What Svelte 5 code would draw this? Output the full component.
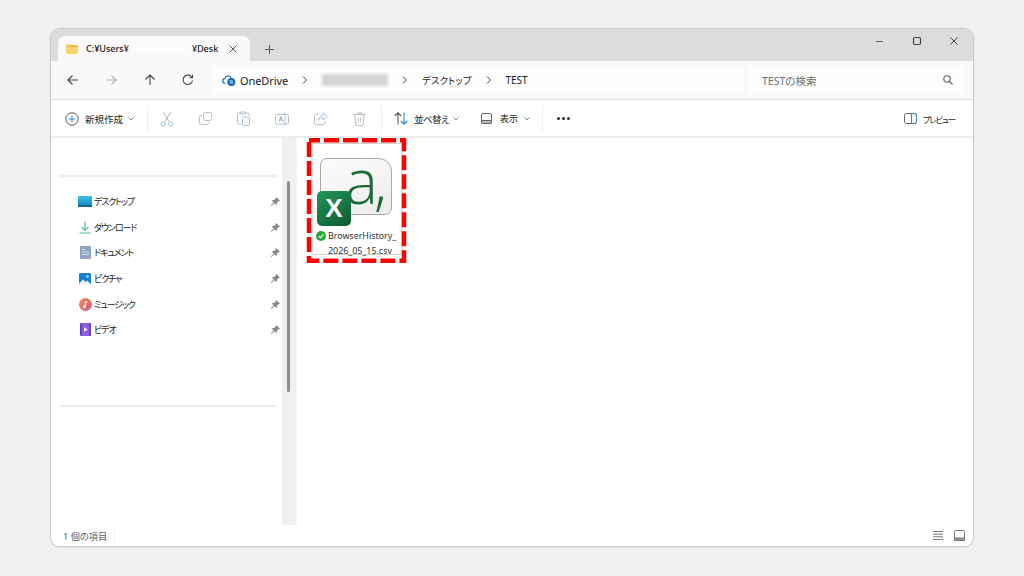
<script lang="ts">
	// Quick access rows in the sidebar
	const quickAccess = [
		{ name: 'デスクトップ', icon: 'desktop' },
		{ name: 'ダウンロード', icon: 'download' },
		{ name: 'ドキュメント', icon: 'document' },
		{ name: 'ピクチャ', icon: 'picture' },
		{ name: 'ミュージック', icon: 'music' },
		{ name: 'ビデオ', icon: 'video' }
	];
</script>

<div class="page">
	<div class="window">
		<!-- Tab strip -->
		<div class="tabbar">
			<div class="tab">
				<svg class="folder" width="12" height="10" viewBox="0 0 12 10">
					<path d="M0 1.200C0 .5.5 0 1.200 0h2.600l1.400 1.200h5.600c.7 0 1.200.5 1.200 1.200v6.400c0 .7-.5 1.200-1.200 1.200H1.200C.5 10 0 9.500 0 8.800z" fill="#f8d26a"></path>
					<path d="M0 3h12V2.400c0-.7-.5-1.200-1.200-1.200H5.200L3.800 2.400H0z" fill="#eab83f"></path>
				</svg>
				<span class="tab-title">C:¥Users¥<span class="tab-blur"></span>¥Desk</span>
				<svg class="tab-close" width="8" height="8" viewBox="0 0 8 8" fill="none" stroke="#555" stroke-width="1">
					<path d="M.5.5l7 7M7.500.5l-7 7"></path>
				</svg>
			</div>
			<svg class="tab-add" width="9" height="9" viewBox="0 0 9 9" stroke="#555" stroke-width="1">
				<path d="M4.500 0v9M0 4.500h9"></path>
			</svg>
			<div class="caption">
				<svg width="10" height="10" viewBox="0 0 10 10" stroke="#666" stroke-width="1"><path d="M1 5.500h7"></path></svg>
				<svg width="10" height="10" viewBox="0 0 10 10" fill="none" stroke="#444" stroke-width="1.200"><rect x="1.500" y="1.500" width="7" height="7" rx="1.200"></rect></svg>
				<svg width="10" height="10" viewBox="0 0 10 10" stroke="#444" stroke-width="1"><path d="M1.500 1.500l7 7M8.500 1.500l-7 7"></path></svg>
			</div>
		</div>

		<!-- Navigation and address -->
		<div class="navbar">
			<div class="nav-buttons">
				<svg width="12" height="12" viewBox="0 0 12 12" fill="none" stroke="#444" stroke-width="1.100"><path d="M11 6H1M5.500 1.500L1 6l4.500 4.500"></path></svg>
				<svg width="12" height="12" viewBox="0 0 12 12" fill="none" stroke="#b4b4b4" stroke-width="1.100"><path d="M1 6h10M6.500 1.500L11 6l-4.500 4.500"></path></svg>
				<svg width="12" height="12" viewBox="0 0 12 12" fill="none" stroke="#444" stroke-width="1.100"><path d="M6 11V1M1.500 5.500L6 1l4.500 4.500"></path></svg>
				<svg width="12" height="12" viewBox="0 0 12 12" fill="none" stroke="#444" stroke-width="1.100"><path d="M10.500 6.500A4.700 4.700 0 1 1 9 2.300L10.500 3.800M10.500 .8v3H7.500"></path></svg>
			</div>
			<div class="address">
				<svg class="cloud" width="14" height="13" viewBox="0 0 15 13">
					<path d="M3.500 9.500a2.500 2.500 0 0 1-.3-5A3.500 3.500 0 0 1 9.800 3.500" fill="none" stroke="#1f72c8" stroke-width="1.300"></path>
					<circle cx="10" cy="8" r="4.300" fill="#1668bb"></circle>
					<path d="M8 7h3.500M12 9H8.500" stroke="#fff" stroke-width=".9"></path>
				</svg>
				<span class="crumb first">OneDrive</span>
				<svg class="chev" width="6" height="8" viewBox="0 0 6 8" fill="none" stroke="#444" stroke-width="1"><path d="M1 .5L4.500 4 1 7.500"></path></svg>
				<span class="addr-blur"></span>
				<svg class="chev" width="6" height="8" viewBox="0 0 6 8" fill="none" stroke="#444" stroke-width="1"><path d="M1 .5L4.500 4 1 7.500"></path></svg>
				<span class="crumb">デスクトップ</span>
				<svg class="chev" width="6" height="8" viewBox="0 0 6 8" fill="none" stroke="#444" stroke-width="1"><path d="M1 .5L4.500 4 1 7.500"></path></svg>
				<span class="crumb">TEST</span>
			</div>
			<div class="search">
				<span>TESTの検索</span>
				<svg width="10" height="10" viewBox="0 0 10 10" fill="none" stroke="#555" stroke-width="1.100"><circle cx="4" cy="4" r="3.200"></circle><path d="M6.400 6.400L9.500 9.500"></path></svg>
			</div>
		</div>

		<!-- Command bar -->
		<div class="toolbar">
			<div class="tool new">
				<svg width="14" height="14" viewBox="0 0 14 14" fill="none"><circle cx="7" cy="7" r="6.200" stroke="#555" stroke-width="1"></circle><path d="M7 3.800v6.400M3.800 7h6.400" stroke="#2b88d8" stroke-width="1.100"></path></svg>
				<span>新規作成</span>
				<svg class="caret" width="6" height="4" viewBox="0 0 6 4" fill="none" stroke="#777" stroke-width=".9"><path d="M.5.5L3 3 5.500.5"></path></svg>
			</div>
			<i class="sep first-sep"></i>
			<div class="edit-icons">
				<svg width="14" height="16" viewBox="0 0 14 16" fill="none" stroke-width="1"><path d="M3 1l6 9.500M11 1L5 10.500" stroke="#b0b6bc"></path><circle cx="3.300" cy="13" r="2.300" stroke="#9cc8ee"></circle><circle cx="10.700" cy="13" r="2.300" stroke="#9cc8ee"></circle></svg>
				<svg width="13" height="13" viewBox="0 0 13 13" fill="none" stroke-width="1"><rect x="4.500" y=".5" width="8" height="8" rx="1.800" stroke="#9cc8ee"></rect><path d="M3 3.500H2.500a2 2 0 0 0-2 2v5a2 2 0 0 0 2 2h5a2 2 0 0 0 2-2V10" stroke="#b8bdc2"></path></svg>
				<svg width="13" height="15" viewBox="0 0 13 15" fill="none" stroke-width="1"><path d="M3.500 2H2a1.500 1.500 0 0 0-1.500 1.500v8A1.500 1.500 0 0 0 2 13h2M9 2h1.500A1.500 1.500 0 0 1 12 3.500V5M3.500 1h5v2h-5z" stroke="#b8bdc2"></path><rect x="5.500" y="6" width="7" height="8.500" rx="1.500" stroke="#9cc8ee"></rect></svg>
				<svg width="14" height="14" viewBox="0 0 14 14" fill="none" stroke-width="1"><rect x=".5" y="2.500" width="13" height="9.500" rx="1.800" stroke="#b8bdc2"></rect><path d="M4 9.500l2-5 2 5M4.700 8h2.600" stroke="#9ea4aa"></path><path d="M10 .5v13" stroke="#9cc8ee"></path></svg>
				<svg width="14" height="13" viewBox="0 0 14 13" fill="none" stroke-width="1"><path d="M5 2H2.500a2 2 0 0 0-2 2v6.500a2 2 0 0 0 2 2H9a2 2 0 0 0 2-2V9" stroke="#b8bdc2"></path><path d="M9 .8l4.300 3.700L9 8.200V6C7 6 5.500 6.500 4.500 8.500 4.800 5.500 6.500 3.300 9 3z" stroke="#9cc8ee"></path></svg>
				<svg width="13" height="14" viewBox="0 0 13 14" fill="none" stroke="#b8bdc2" stroke-width="1"><path d="M.5 2.500h12M4.500 2.500V1h4v1.500M2 2.500l.7 9.500a1.500 1.500 0 0 0 1.500 1.500h4.600A1.500 1.500 0 0 0 10.300 12l.7-9.500M5.300 5.500v5M7.700 5.500v5"></path></svg>
			</div>
			<i class="sep second-sep"></i>
			<div class="tool sort">
				<svg width="14" height="13" viewBox="0 0 14 13" fill="none" stroke-width="1.100"><path d="M4 12.500V1M.8 4L4 .8 7.200 4" stroke="#555"></path><path d="M10 .5V12M6.800 9l3.200 3.200L13.200 9" stroke="#2b88d8"></path></svg>
				<span>並べ替え</span>
				<svg class="caret" width="6" height="4" viewBox="0 0 6 4" fill="none" stroke="#777" stroke-width=".9"><path d="M.5.5L3 3 5.500.5"></path></svg>
			</div>
			<div class="tool view">
				<svg width="11" height="11" viewBox="0 0 11 11" fill="none" stroke="#666" stroke-width="1"><rect x=".5" y=".5" width="10" height="10" rx="1.500"></rect><path d="M.5 7.500h10v1.500a1.500 1.500 0 0 1-1.500 1.500H2A1.500 1.500 0 0 1 .5 9z" fill="#bbb"></path></svg>
				<span>表示</span>
				<svg class="caret" width="6" height="4" viewBox="0 0 6 4" fill="none" stroke="#777" stroke-width=".9"><path d="M.5.5L3 3 5.500.5"></path></svg>
			</div>
			<i class="sep third-sep"></i>
			<div class="dots"><i></i><i></i><i></i></div>
			<div class="tool preview">
				<svg width="13" height="11" viewBox="0 0 13 11" fill="none" stroke-width="1"><rect x=".5" y=".5" width="12" height="10" rx="2" stroke="#666"></rect><path d="M7.500.5h3a2 2 0 0 1 2 2v6a2 2 0 0 1-2 2h-3z" stroke="#2b88d8"></path></svg>
				<span>プレビュー</span>
			</div>
		</div>

		<!-- Sidebar and file pane -->
		<div class="body">
			<aside class="sidebar">
				<div class="side-list">
					<hr />
					<ul>
						{#each quickAccess as item}
							<li>
								<span class="side-icon">
									{#if item.icon === 'desktop'}
										<svg width="14" height="11" viewBox="0 0 14 11"><defs><linearGradient id="dk" x1="0" y1="0" x2="0" y2="1"><stop offset="0" stop-color="#3cc3e6"></stop><stop offset="1" stop-color="#0e7fb8"></stop></linearGradient></defs><rect width="14" height="11" rx="1" fill="url(#dk)"></rect><rect x="0" y="9.300" width="14" height="1.700" fill="#0b5f92"></rect></svg>
									{:else if item.icon === 'download'}
										<svg width="12" height="13" viewBox="0 0 12 13" fill="none" stroke-width="1.100"><path d="M6 .5v8.500M2.500 5.800L6 9.300l3.500-3.500" stroke="#46b28c"></path><path d="M.5 12h11" stroke="#7fd6bc" stroke-width="1.400"></path></svg>
									{:else if item.icon === 'document'}
										<svg width="11" height="13" viewBox="0 0 11 13"><rect width="11" height="13" rx="1" fill="#8ea5c0"></rect><path d="M2 3.500h3M2 6h7M2 8.500h7" stroke="#d6e0ea" stroke-width="1"></path></svg>
									{:else if item.icon === 'picture'}
										<svg width="12" height="12" viewBox="0 0 12 12"><rect width="12" height="12" rx="1" fill="#1580d8"></rect><path d="M0 10.500l4-4 2.500 2.500 1.500-1.500 4 3.500V11a1 1 0 0 1-1 1H1a1 1 0 0 1-1-1z" fill="#e8f4fc"></path><circle cx="8.500" cy="3.500" r="1.200" fill="#bfe2fa"></circle></svg>
									{:else if item.icon === 'music'}
										<svg width="13" height="13" viewBox="0 0 13 13"><defs><linearGradient id="mu" x1="0" y1="0" x2="1" y2="1"><stop offset="0" stop-color="#ee8a4e"></stop><stop offset="1" stop-color="#d05a8a"></stop></linearGradient></defs><circle cx="6.500" cy="6.500" r="6.500" fill="url(#mu)"></circle><circle cx="5.300" cy="8.800" r="1.400" fill="#fff"></circle><path d="M6.300 8.800V3.500l2.400 1" fill="none" stroke="#fff" stroke-width="1"></path></svg>
									{:else}
										<svg width="11" height="13" viewBox="0 0 11 13"><rect width="11" height="13" rx="1" fill="#6b3ec4"></rect><rect x="2" y="0" width="7" height="13" fill="#8d5de0"></rect><path d="M4 4.300l3.500 2.200L4 8.700z" fill="#fff"></path></svg>
									{/if}
								</span>
								<span class="side-name">{item.name}</span>
								<svg class="pin" width="9" height="9" viewBox="0 0 9 9" fill="#8a8a8a"><path d="M5.300 0L9 3.700l-.8.6-.7-.2L5.800 6l.1 1.400-.7.700L3.300 6.200 .7 8.800 0 8.700l.1-.6 2.600-2.600L.9 3.700l.7-.7L3 3.100l1.900-1.700-.2-.7z"></path></svg>
							</li>
						{/each}
					</ul>
					<hr class="bottom" />
				</div>
				<div class="scrollbar"><i></i></div>
			</aside>

			<main class="files">
				<div class="file">
					<svg class="annotation" width="101" height="125" viewBox="0 0 101 125" fill="none">
						<rect x="6" y="5.500" width="90" height="111" stroke="#cfcfcf" stroke-width="1"></rect>
						<rect x="3" y="2.300" width="95" height="120.400" stroke="#ff0000" stroke-width="4.500" stroke-dasharray="15 4" stroke-dashoffset="4"></rect>
					</svg>
					<div class="thumb">
						<div class="sheet">
							<svg width="72" height="58" viewBox="0 0 72 58">
								<text x="25" y="46" font-family="Open Sans" font-weight="300" font-size="62" letter-spacing="-4" fill="#1c6b33">a,</text>
							</svg>
						</div>
						<div class="excel">X</div>
					</div>
					<div class="file-label">
						<svg class="synced" width="10" height="10" viewBox="0 0 10 10"><circle cx="5" cy="5" r="5" fill="#2aa83a"></circle><path d="M2.600 5.200l1.700 1.600 3.100-3.300" fill="none" stroke="#fff" stroke-width="1.100"></path></svg>
						<span>BrowserHistory_<br />2026_05_15.csv</span>
					</div>
				</div>
			</main>
		</div>

		<!-- Status bar -->
		<div class="statusbar">
			<span class="count">1 個の項目</span>
			<i class="status-sep"></i>
			<div class="view-switch">
				<svg width="10" height="9" viewBox="0 0 10 9" stroke="#777" stroke-width="1"><path d="M0 .5h10M0 3.200h10M0 5.800h10M0 8.500h10"></path></svg>
				<svg width="11" height="11" viewBox="0 0 11 11" fill="none" stroke="#777" stroke-width="1"><rect x=".5" y=".5" width="10" height="10" rx="1"></rect><path d="M.5 8h10v2.500H.5z" fill="#999"></path></svg>
			</div>
		</div>
	</div>
</div>

<style>
	:global(body) {
		margin: 0;
		background: #f0f0f0;
	}

	.page {
		box-sizing: border-box;
		width: 1024px;
		height: 576px;
		padding: 29px 51px 30px;
		font-family: 'Noto Sans', 'Noto Sans CJK JP', sans-serif;
		font-feature-settings: 'palt';
		color: #222;
	}

	.window {
		display: flex;
		flex-direction: column;
		height: 100%;
		background: #fff;
		border-radius: 8px;
		box-shadow: 0 0 0 1px #c9c9c9, 0 1px 2px rgba(0, 0, 0, 0.15);
		overflow: hidden;
	}

	.tabbar {
		display: flex;
		align-items: flex-end;
		flex: none;
		height: 32px;
		padding-left: 7px;
		background: #dcdcdc;
	}

	.tab {
		display: flex;
		align-items: center;
		box-sizing: border-box;
		width: 192px;
		height: 25px;
		padding: 0 13px 0 8px;
		background: #f9f9f9;
		border-radius: 7px 7px 0 0;
	}

	.tab-title {
		width: 132px;
		margin-left: 8px;
		white-space: nowrap;
		font-size: 9.200px;
		font-weight: 500;
		letter-spacing: -0.1px;
	}

	.tab-blur {
		display: inline-block;
		width: 63px;
		height: 9px;
		background: #fafafa;
		filter: blur(2px);
	}

	.tab-close {
		margin-left: auto;
	}

	.tab-add {
		align-self: center;
		margin: 8px 0 0 15px;
	}

	.caption {
		display: flex;
		align-items: center;
		gap: 27px;
		align-self: flex-start;
		height: 24px;
		margin-left: auto;
		padding-right: 14px;
	}

	.navbar {
		display: flex;
		align-items: center;
		flex: none;
		height: 39px;
		padding: 0 9px 0 16px;
		background: #f9f9f9;
		border-bottom: 1px solid #dedede;
		box-sizing: border-box;
	}

	.nav-buttons {
		display: flex;
		gap: 26.300px;
		width: 145px;
	}

	.address {
		display: flex;
		align-items: center;
		box-sizing: border-box;
		width: 531px;
		height: 26px;
		padding-left: 10px;
		background: #fdfdfd;
		border-radius: 4px;
	}

	.crumb {
		font-size: 9.500px;
		white-space: nowrap;
	}

	.crumb:last-child {
		font-size: 10px;
	}

	.crumb.first {
		margin-left: 4px;
		font-size: 11px;
		letter-spacing: -0.1px;
	}

	.chev {
		margin: 0 14px;
	}

	.addr-blur {
		width: 66px;
		height: 12px;
		background: #d4d4d4;
		filter: blur(1.500px);
	}

	.search {
		display: flex;
		align-items: center;
		justify-content: space-between;
		box-sizing: border-box;
		width: 215px;
		height: 26px;
		margin-left: 6px;
		padding: 0 11px 0 13px;
		background: #fdfdfd;
		border-radius: 4px;
		font-size: 10.500px;
		color: #6c6c6c;
	}

	.toolbar {
		display: flex;
		align-items: center;
		flex: none;
		box-sizing: border-box;
		height: 38px;
		padding: 1px 0 0 14px;
		background: #fff;
		border-bottom: 2px solid #ececec;
		font-size: 9.500px;
	}

	.tool {
		display: flex;
		align-items: center;
	}

	.tool span {
		white-space: nowrap;
	}

	.new span {
		margin: 0 5px 0 6px;
	}

	.sep {
		width: 1px;
		height: 26px;
		background: #efefef;
	}

	.first-sep {
		margin-left: 13px;
	}

	.edit-icons {
		display: flex;
		align-items: center;
		gap: 25px;
		box-sizing: border-box;
		width: 233px;
		padding-left: 12px;
	}

	.sort {
		margin-left: 12px;
	}

	.sort span {
		margin: 0 4px 0 6px;
		letter-spacing: -0.6px;
	}

	.view {
		margin-left: 22px;
	}

	.view span {
		margin: 0 6px 0 8px;
		font-size: 9px;
	}

	.third-sep {
		margin-left: 12px;
	}

	.dots {
		display: flex;
		gap: 2px;
		margin-left: 14px;
	}

	.dots i {
		width: 3px;
		height: 3px;
		background: #333;
		border-radius: 50%;
	}

	.preview {
		margin: 0 18px 0 auto;
	}

	.preview span {
		margin-left: 6px;
		font-size: 8.500px;
		letter-spacing: -1.300px;
	}

	.body {
		display: flex;
		flex: 1;
		min-height: 0;
	}

	.sidebar {
		display: flex;
		flex: none;
		width: 245px;
		border-right: 1px solid #f4f4f4;
	}

	.side-list {
		display: flex;
		flex: 1;
		flex-direction: column;
		padding: 37px 6px 0 9px;
	}

	hr {
		width: 100%;
		height: 2px;
		margin: 0;
		background: #ececec;
		border: 0;
	}

	hr.bottom {
		margin-top: 62px;
	}

	ul {
		margin: 0;
		padding: 12px 0 0;
		list-style: none;
	}

	li {
		display: flex;
		align-items: center;
		height: 25.600px;
		padding-left: 18px;
		font-size: 9px;
		letter-spacing: -1.150px;
	}

	.side-icon {
		display: flex;
		justify-content: center;
		width: 14px;
		margin-right: 2px;
	}

	.pin {
		margin-left: auto;
		margin-right: -4px;
	}

	.scrollbar {
		flex: none;
		box-sizing: border-box;
		width: 14px;
		padding: 43px 0 0 5px;
		background: #f0f0f0;
	}

	.scrollbar i {
		display: block;
		width: 3px;
		height: 211px;
		background: #8e8e8e;
		border-radius: 2px;
	}

	.files {
		flex: 1;
		padding-left: 9px;
	}

	.file {
		position: relative;
		box-sizing: border-box;
		width: 101px;
		height: 125px;
		padding: 20px 0 0 11px;
	}

	.annotation {
		position: absolute;
		top: 0;
		left: 0;
	}

	.thumb {
		position: relative;
		width: 75px;
		height: 68px;
	}

	.sheet {
		box-sizing: border-box;
		width: 72px;
		height: 57px;
		margin-left: 3px;
		background: linear-gradient(160deg, #fbfbfb, #ececec);
		border: 1.500px solid #a8a8a8;
		border-radius: 7px 13px 7px 7px;
	}

	.sheet svg {
		display: block;
		margin: -1.500px;
		overflow: visible;
	}

	.excel {
		position: absolute;
		top: 33px;
		left: 0;
		display: flex;
		align-items: center;
		justify-content: center;
		width: 34px;
		height: 35px;
		background: linear-gradient(145deg, #25965a, #0c5a32);
		border-radius: 5px;
		color: #fff;
		font-family: 'Liberation Sans', sans-serif;
		font-size: 26px;
		font-weight: 700;
	}

	.file-label {
		display: flex;
		margin: 3px 0 0 -1px;
		font-size: 8.900px;
		line-height: 14.500px;
		color: #333;
		white-space: nowrap;
	}

	.synced {
		flex: none;
		margin: 2px 2px 0 0;
	}

	.statusbar {
		display: flex;
		align-items: center;
		flex: none;
		height: 21px;
		padding: 0 8px 0 12px;
		font-size: 9.200px;
		color: #56606c;
	}

	.status-sep {
		width: 1px;
		height: 12px;
		margin-left: 7px;
		background: #f0f0f0;
	}

	.view-switch {
		display: flex;
		align-items: center;
		gap: 11px;
		margin-left: auto;
	}
</style>
